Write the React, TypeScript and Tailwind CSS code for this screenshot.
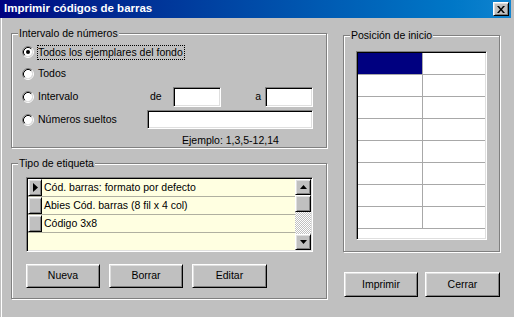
import React from "react";

const raised =
  "bg-[#c0c0c0] border border-t-white border-l-white border-b-black border-r-black shadow-[inset_1px_1px_0_#dfdfdf,inset_-1px_-1px_0_#808080]";
const sunken =
  "border border-t-[#808080] border-l-[#808080] border-b-white border-r-white shadow-[inset_1px_1px_0_#000,inset_-1px_-1px_0_#dfdfdf]";
const etched =
  "relative border border-[#808080] shadow-[inset_1px_1px_0_#fff,1px_1px_0_#fff]";

function Radio({ checked }: { checked?: boolean }) {
  return (
    <svg width="12" height="12" viewBox="0 0 12 12" className="shrink-0">
      <circle cx="6" cy="6" r="4.2" fill="#fff" />
      <path d="M2.11 9.89A5.5 5.5 0 0 1 9.89 2.11" stroke="#808080" fill="none" />
      <path d="M9.89 2.11A5.5 5.5 0 0 1 2.11 9.89" stroke="#fff" fill="none" />
      <path d="M2.82 9.18A4.5 4.5 0 0 1 9.18 2.82" stroke="#000" fill="none" />
      <path d="M9.18 2.82A4.5 4.5 0 0 1 2.82 9.18" stroke="#dfdfdf" fill="none" />
      {checked && <circle cx="6" cy="6" r="2" fill="#000" />}
    </svg>
  );
}

function Legend({ children }: { children: React.ReactNode }) {
  return (
    <div className="absolute -top-[7px] left-[6px] px-[1px] bg-[#c0c0c0] leading-[13px]">
      {children}
    </div>
  );
}

function Button({ label, w, h }: { label: string; w: string; h: string }) {
  return (
    <div className={`${raised} ${w} ${h} flex items-center justify-center`}>
      {label}
    </div>
  );
}

const labelRows = [
  "Cód. barras: formato por defecto",
  "Abies Cód. barras (8 fil x 4 col)",
  "Código 3x8",
];

export default function App() {
  return (
    <div className="w-[514px] h-[317px] bg-[#c0c0c0] overflow-hidden text-[10.5px] text-black font-['Liberation_Sans',Arial,sans-serif] shadow-[inset_1px_0_0_#c0c0c0,inset_2px_0_0_#fff]">
      {/* Title bar */}
      <div className="w-[511px] h-[18px] flex items-center justify-between bg-gradient-to-r from-[#000080] to-[#1084d0]">
        <span className="pl-[4px] text-white font-bold text-[11.5px]">
          Imprimir códigos de barras
        </span>
        <div className={`${raised} w-[16px] h-[14px] mr-[2px] flex items-center justify-center`}>
          <svg width="8" height="7" viewBox="0 0 8 7">
            <path d="M0 0h2l2 2.5L6 0h2L5 3.5 8 7H6L4 4.5 2 7H0l3-3.5z" fill="#000" />
          </svg>
        </div>
      </div>

      <div className="flex pl-[11px]">
        {/* Left column */}
        <div className="w-[316px]">
          <div className={`${etched} mt-[15px] h-[115px]`}>
            <Legend>Intervalo de números</Legend>
            <div className="pt-[7px] pl-[10px]">
              <div className="flex items-center h-[22px]">
                <Radio checked />
                <span className="ml-[3px] border border-dotted border-black leading-[13px] pr-[1px]">
                  Todos los ejemplares del fondo
                </span>
              </div>
              <div className="flex items-center h-[22px]">
                <Radio />
                <span className="ml-[4px]">Todos</span>
              </div>
              <div className="flex items-center h-[23px]">
                <Radio />
                <span className="ml-[4px] w-[112px]">Intervalo</span>
                <span className="w-[23px]">de</span>
                <div className={`${sunken} bg-white w-[48px] h-[20px]`} />
                <span className="w-[44px] text-right pr-[4px]">a</span>
                <div className={`${sunken} bg-white w-[48px] h-[20px]`} />
              </div>
              <div className="flex items-center h-[23px]">
                <Radio />
                <span className="ml-[4px] w-[109px]">Números sueltos</span>
                <div className={`${sunken} bg-white w-[166px] h-[19px]`} />
              </div>
              <div className="mt-[3px] ml-[160px] leading-[13px]">Ejemplo: 1,3,5-12,14</div>
            </div>
          </div>

          <div className={`${etched} mt-[15px] h-[136px]`}>
            <Legend>Tipo de etiqueta</Legend>
            <div className={`${sunken} mt-[13px] ml-[14px] w-[287px] h-[75px] p-[1px] flex`}>
              <div className="flex-1 bg-[#ffffe1]">
                {labelRows.map((t, i) => (
                  <div key={t} className="flex h-[18px] border-b border-[#b0b0a0]">
                    <div className={`${raised} w-[14px] h-full flex items-center justify-center`}>
                      {i === 0 && (
                        <svg width="5" height="9" viewBox="0 0 5 9">
                          <path d="M0 0l5 4.5L0 9z" fill="#000" />
                        </svg>
                      )}
                    </div>
                    <div className="pl-[2px] leading-[17px]">{t}</div>
                  </div>
                ))}
              </div>
              <div className="w-[16px] flex flex-col">
                <div className={`${raised} h-[16px] flex items-center justify-center`}>
                  <svg width="7" height="4" viewBox="0 0 7 4">
                    <path d="M3.5 0L7 4H0z" fill="#000" />
                  </svg>
                </div>
                <div className={`${raised} h-[17px]`} />
                <div className="flex-1 bg-[repeating-conic-gradient(#fff_0_25%,#c0c0c0_0_50%)] bg-[length:2px_2px]" />
                <div className={`${raised} h-[16px] flex items-center justify-center`}>
                  <svg width="7" height="4" viewBox="0 0 7 4">
                    <path d="M0 0h7L3.5 4z" fill="#000" />
                  </svg>
                </div>
              </div>
            </div>
            <div className="flex mt-[12px] ml-[14px] gap-[9px]">
              <Button label="Nueva" w="w-[74px]" h="h-[24px]" />
              <Button label="Borrar" w="w-[74px]" h="h-[24px]" />
              <Button label="Editar" w="w-[75px]" h="h-[24px]" />
            </div>
          </div>
        </div>

        {/* Right column */}
        <div className="ml-[16px] w-[157px]">
          <div className={`${etched} mt-[17px] h-[217px]`}>
            <Legend>Posición de inicio</Legend>
            <div className={`${sunken} mt-[15px] ml-[12px] w-[131px] h-[189px] bg-white p-[1px]`}>
              {Array.from({ length: 8 }).map((_, r) => (
                <div key={r} className="flex h-[22px] border-b border-[#a8a8a8]">
                  <div
                    className={`w-[65px] border-r border-[#a8a8a8] ${
                      r === 0 ? "bg-[#000080]" : ""
                    }`}
                  />
                  <div className="flex-1" />
                </div>
              ))}
            </div>
          </div>
          <div className="flex mt-[20px] ml-[1px] gap-[7px]">
            <Button label="Imprimir" w="w-[74px]" h="h-[25px]" />
            <Button label="Cerrar" w="w-[75px]" h="h-[25px]" />
          </div>
        </div>
      </div>
    </div>
  );
}
